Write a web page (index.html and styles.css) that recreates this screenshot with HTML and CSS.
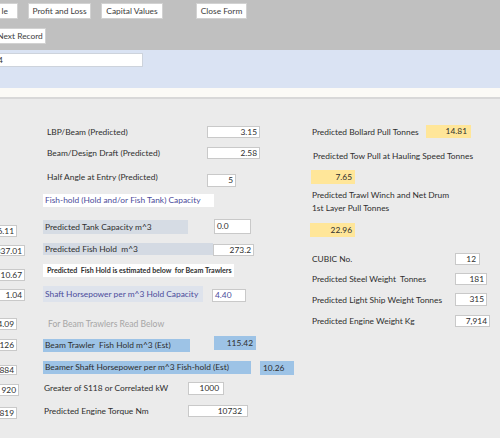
FILE: index.html
```html
<!DOCTYPE html>
<html lang="en">
<head>
    <meta charset="UTF-8">
    <title>Vessel Predictions</title>
    <link rel="stylesheet" href="styles.css">
</head>
<body>
    <div class="toolbar">
        <div class="btn-row">
            <button class="btn btn-cut">le</button>
            <button class="btn btn-pl">Profit and Loss</button>
            <button class="btn btn-cap">Capital Values</button>
            <button class="btn btn-close">Close Form</button>
        </div>
        <div class="btn-row row-two">
            <button class="btn btn-next">Next Record</button>
        </div>
    </div>

    <div class="band">
        <div class="band-field">4</div>
    </div>
    <div class="strip"></div>

    <div class="main">
        <!-- fields cut off at the left edge -->
        <div class="stub-col">
            <div class="stub s1">6.11</div>
            <div class="stub stub-wide s2">337.01</div>
            <div class="stub stub-wide s3">10.67</div>
            <div class="stub stub-wide s4">1.04</div>
            <div class="stub s5">4.09</div>
            <div class="stub s6">126</div>
            <div class="stub s7">884</div>
            <div class="stub stub-mid s8">920</div>
            <div class="stub s9">819</div>
        </div>

        <div class="mid-col">
            <div class="row r-lbp">
                <span class="lbl lbl-top">LBP/Beam (Predicted)</span>
                <span class="field f-top">3.15</span>
            </div>
            <div class="row r-draft">
                <span class="lbl lbl-top">Beam/Design Draft (Predicted)</span>
                <span class="field f-top">2.58</span>
            </div>
            <div class="row r-angle">
                <span class="lbl lbl-top">Half Angle at Entry (Predicted)</span>
                <span class="field f-angle">5</span>
            </div>
            <div class="heading r-hold">Fish-hold (Hold and/or Fish Tank) Capacity</div>
            <div class="row r-tank">
                <span class="tag tag-tank">Predicted Tank Capacity m^3</span>
                <span class="field left f-tank">0.0</span>
            </div>
            <div class="row r-fish">
                <span class="tag tag-fish">Predicted Fish Hold&nbsp; m^3</span>
                <span class="field f-fish">273.2</span>
            </div>
            <div class="note r-note">Predicted&nbsp; Fish Hold is estimated below&nbsp; for Beam Trawlers</div>
            <div class="row r-shaft">
                <span class="tag tag-shaft">Shaft Horsepower per m^3 Hold Capacity</span>
                <span class="field left blue-text f-shaft">4.40</span>
            </div>
            <div class="muted r-read">For Beam Trawlers Read Below</div>
            <div class="row r-beam">
                <span class="tag tag-blue tag-beam">Beam Trawler&nbsp; Fish Hold m^3 (Est)</span>
                <span class="calc f-beam">115.42</span>
            </div>
            <div class="row r-beamer">
                <span class="tag tag-blue tag-beamer">Beamer Shaft Horsepower per m^3 Fish-hold (Est)</span>
                <span class="calc left f-beamer">10.26</span>
            </div>
            <div class="row r-greater">
                <span class="lbl lbl-low">Greater of S118 or Correlated kW</span>
                <span class="field f-greater">1000</span>
            </div>
            <div class="row r-torque">
                <span class="lbl lbl-low">Predicted Engine Torque Nm</span>
                <span class="field f-torque">10732</span>
            </div>
        </div>

        <div class="right-col">
            <div class="row r-bollard">
                <span class="lbl lbl-right">Predicted Bollard Pull Tonnes</span>
                <span class="hi f-bollard">14.81</span>
            </div>
            <div class="lbl r-tow">Predicted Tow Pull at Hauling Speed Tonnes</div>
            <div class="hi r-tow-val">7.65</div>
            <div class="lbl r-winch">Predicted Trawl Winch and Net Drum<br>1st Layer Pull Tonnes</div>
            <div class="hi r-winch-val">22.96</div>
            <div class="row r-cubic">
                <span class="lbl lbl-right2">CUBIC No.</span>
                <span class="field f-cubic">12</span>
            </div>
            <div class="row r-steel">
                <span class="lbl lbl-right2">Predicted Steel Weight&nbsp; Tonnes</span>
                <span class="field f-steel">181</span>
            </div>
            <div class="row r-light">
                <span class="lbl lbl-right2">Predicted Light Ship Weight Tonnes</span>
                <span class="field f-light">315</span>
            </div>
            <div class="row r-engine">
                <span class="lbl lbl-right2">Predicted Engine Weight Kg</span>
                <span class="field f-engine">7,914</span>
            </div>
        </div>
    </div>
</body>
</html>
```

FILE: styles.css
```css
body {
    margin: 0;
    width: 500px;
    height: 438px;
    overflow: hidden;
    font-family: Lato, "Open Sans", sans-serif;
    font-size: 8.4px;
    color: #2e2e2e;
    background: #ebebeb;
}

/* top bar with buttons */
.toolbar {
    height: 50px;
    background: #c0c0c0;
    overflow: hidden;
}
.btn-row {
    display: flex;
    gap: 10px;
    padding-top: 3px;
}
.row-two {
    padding-top: 9px;
}
.btn {
    height: 16px;
    padding: 0;
    border: 1px solid #d2d2d2;
    background: #fff;
    font-family: Lato, sans-serif;
    font-size: 8.4px;
    color: #3c3c3c;
    text-align: center;
}
.btn-cut {
    width: 30px;
    margin-left: -12px;
    text-align: right;
    padding-right: 9px;
}
.btn-pl {
    width: 63px;
}
.btn-cap {
    width: 62px;
}
.btn-close {
    width: 51px;
    margin-left: 23px;
}
.btn-next {
    width: 52px;
    margin-left: -6px;
    height: 16px;
}

/* record selector band */
.band {
    height: 38px;
    background: #dae3f3;
    padding-top: 3px;
    box-sizing: border-box;
}
.band-field {
    width: 147px;
    height: 14px;
    margin-left: -4px;
    box-sizing: border-box;
    background: #fff;
    border: 1px solid #cdd3dc;
    line-height: 12px;
    padding-left: 1px;
}
.strip {
    height: 9px;
    background: #fbfaf6;
    border-bottom: 2px solid #d8d8d8;
}

/* form body */
.main {
    display: flex;
    height: 339px;
    background: #ebebeb;
}
.stub-col {
    width: 43px;
    display: flex;
    flex-direction: column;
    flex-shrink: 0;
}
.mid-col {
    width: 267px;
    display: flex;
    flex-direction: column;
    flex-shrink: 0;
}
.right-col {
    flex: 1;
    display: flex;
    flex-direction: column;
}

.stub,
.field,
.hi,
.calc {
    box-sizing: border-box;
    height: 12px;
    line-height: 10px;
    background: #fff;
    border: 1px solid #c9c9c9;
    text-align: right;
    padding-right: 2px;
    white-space: nowrap;
    overflow: hidden;
    flex-shrink: 0;
}
.stub {
    width: 37px;
    margin-left: -20px;
    direction: rtl;
}
.stub-wide {
    width: 45px;
}
.stub-mid {
    width: 39px;
}
.s1 { margin-top: 126px; }
.s2 { margin-top: 8px; height: 11px; }
.s3 { margin-top: 13px; }
.s4 { margin-top: 8px; }
.s5 { margin-top: 17px; }
.s6 { margin-top: 9px; }
.s7 { margin-top: 14px; height: 10px; line-height: 8px; }
.s8 { margin-top: 9px; }
.s9 { margin-top: 11px; }

.left {
    text-align: left;
    padding-left: 2px;
}

.row {
    display: flex;
    align-items: flex-start;
    flex-shrink: 0;
}
.lbl {
    line-height: 12px;
    white-space: nowrap;
}
.lbl-top {
    width: 160px;
    padding-left: 4px;
}
.lbl-low {
    width: 144px;
    padding-left: 1px;
    line-height: 13px;
}

.r-lbp { margin-top: 27px; }
.r-draft { margin-top: 9px; }
.r-angle { margin-top: 12px; }
.f-top { width: 53px; }
.f-angle {
    width: 29px;
    height: 13px;
    line-height: 11px;
    margin-top: 3px;
}

.heading {
    margin-top: 7px;
    width: 171px;
    height: 13px;
    line-height: 13px;
    background: #fff;
    color: #4b4b9b;
    padding-left: 2px;
    box-sizing: border-box;
    white-space: nowrap;
}

.tag {
    box-sizing: border-box;
    height: 13px;
    line-height: 13px;
    padding-left: 2px;
    background: #d6dce4;
    white-space: nowrap;
    flex-shrink: 0;
}
.r-tank { margin-top: 12px; }
.tag-tank {
    width: 145px;
    height: 14px;
    line-height: 14px;
    margin-top: 1px;
    margin-right: 26px;
}
.f-tank {
    width: 37px;
    height: 15px;
    line-height: 13px;
}
.r-fish { margin-top: 9px; }
.tag-fish {
    width: 170px;
    height: 12px;
    line-height: 12px;
    background: #d4dae3;
}
.f-fish {
    width: 41px;
    margin-top: 1px;
}

.note {
    margin-top: 8px;
    width: 191px;
    height: 13px;
    line-height: 13px;
    background: #fff;
    font-size: 7.1px;
    font-weight: bold;
    padding-left: 4px;
    box-sizing: border-box;
    white-space: nowrap;
}

.r-shaft { margin-top: 9px; }
.tag-shaft {
    width: 160px;
    height: 16px;
    line-height: 16px;
    background: #dee3ec;
    color: #4b4b9b;
    margin-right: 9px;
}
.blue-text {
    color: #4b4b9b;
}
.f-shaft {
    width: 34px;
    height: 13px;
    line-height: 11px;
    margin-top: 3px;
}

.muted {
    margin-top: 16px;
    height: 12px;
    line-height: 12px;
    padding-left: 5px;
    font-size: 8.6px;
    color: #a6a6a6;
}

.tag-blue {
    background: #9dc3e6;
}
.calc {
    background: #9dc3e6;
    border-color: #9dc3e6;
    height: 14px;
    line-height: 12px;
}
.r-beam { margin-top: 6px; }
.tag-beam {
    width: 147px;
    margin-top: 3px;
    margin-right: 24px;
}
.f-beam {
    width: 42px;
}
.r-beamer { margin-top: 9px; }
.tag-beamer {
    width: 208px;
    margin-right: 9px;
}
.f-beamer {
    width: 34px;
}

.r-greater { margin-top: 7px; }
.f-greater {
    width: 36px;
    height: 13px;
    line-height: 11px;
    padding-right: 4px;
}
.r-torque { margin-top: 10px; }
.f-torque {
    width: 60px;
    padding-right: 5px;
}

/* right column */
.hi {
    background: #ffe699;
    border-color: #ffe699;
    height: 13px;
    line-height: 11px;
    width: 45px;
}
.r-bollard {
    margin-top: 26px;
    align-items: center;
}
.lbl-right {
    width: 116px;
    padding-left: 2px;
    box-sizing: border-box;
}
.f-bollard {
    padding-right: 3px;
}
.r-tow {
    margin-top: 12px;
    padding-left: 3px;
}
.r-tow-val {
    margin-top: 8px;
    margin-left: 1px;
    width: 44px;
    height: 14px;
    line-height: 12px;
}
.r-winch {
    margin-top: 5px;
    padding-left: 2px;
    line-height: 13px;
}
.r-winch-val {
    margin-top: 8px;
    height: 14px;
    line-height: 12px;
}

.lbl-right2 {
    width: 145px;
    padding-left: 2px;
    box-sizing: border-box;
}
.r-cubic,
.r-steel,
.r-light,
.r-engine {
    align-items: center;
}
.r-cubic { margin-top: 16px; }
.r-steel { margin-top: 8px; }
.r-light { margin-top: 8px; }
.r-engine { margin-top: 9px; }
.f-cubic { width: 25px; padding-right: 3px; }
.f-steel { width: 32px; }
.f-light { width: 32px; height: 13px; line-height: 11px; }
.f-engine { width: 35px; }
```
